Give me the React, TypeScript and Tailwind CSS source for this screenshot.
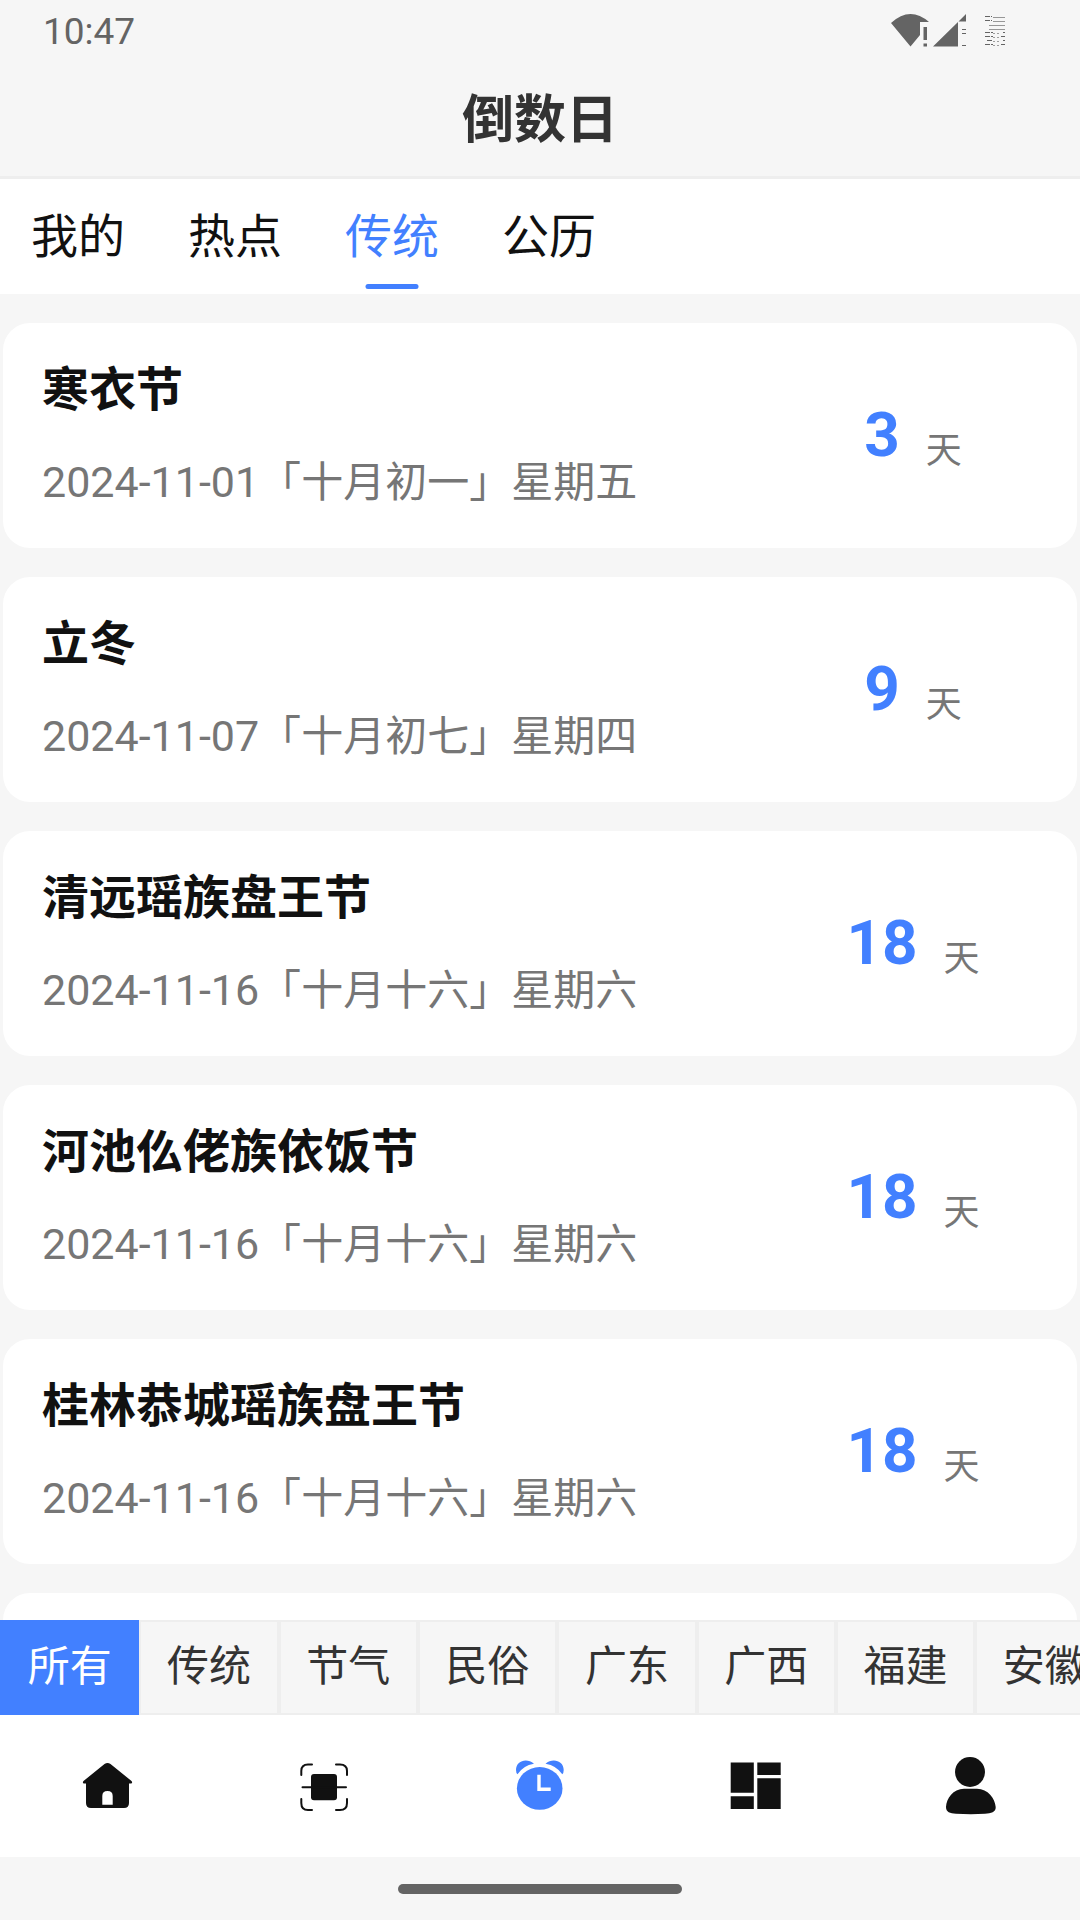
import { useState } from 'react';
import type { ReactNode } from 'react';
import clsx from 'clsx';

interface Festival {
  name: string;
  date: string;
  lunar: string;
  weekday: string;
  days: number;
}

const TABS = ['我的', '热点', '传统', '公历'];

const FILTERS = ['所有', '传统', '节气', '民俗', '广东', '广西', '福建', '安徽'];

const FESTIVALS: Festival[] = [
  { name: '寒衣节', date: '2024-11-01', lunar: '十月初一', weekday: '星期五', days: 3 },
  { name: '立冬', date: '2024-11-07', lunar: '十月初七', weekday: '星期四', days: 9 },
  { name: '清远瑶族盘王节', date: '2024-11-16', lunar: '十月十六', weekday: '星期六', days: 18 },
  { name: '河池仫佬族依饭节', date: '2024-11-16', lunar: '十月十六', weekday: '星期六', days: 18 },
  { name: '桂林恭城瑶族盘王节', date: '2024-11-16', lunar: '十月十六', weekday: '星期六', days: 18 },
];

function StatusIcons() {
  return (
    <svg width="116" height="36" viewBox="0 0 116 36" fill="#646464" aria-hidden="true">
      {/* wifi */}
      <path d="M0 11Q19 -6.500 38 10H29V23L19.500 34.500Z" />
      <path d="M32.500 15H36V28H32.500ZM32.500 31.500H36V34.500H32.500Z" />
      {/* signal */}
      <path d="M42 34.500L67 10V34.500ZM67.500 9.500L75 2V9.500Z" />
      <path d="M71 17H75V18H71ZM71 21H75V22H71ZM71 33H75V34H71Z" />
      {/* battery */}
      <g stroke="#646464" fill="none">
        <path d="M94 4.500H101M94 8.500H101M94 20.500H102M94 24.500H102M96 28.500H102M94 32.500H102" strokeDasharray="5 1" />
        <path d="M102 5.500H114M102 9.500H114M98 13.500H114M98 17.500H114" strokeOpacity="0.65" />
        <path d="M102 21.500H109M102 25.500H109M102 29.500H109M102 33.500H109" strokeDasharray="2 2" strokeOpacity="0.6" />
        <path d="M112 20.500H114M110 24.500H114M112 28.500H114M110 32.500H114" />
      </g>
    </svg>
  );
}

function NavIcon({ children }: { children: ReactNode }) {
  return (
    <svg width="60" height="60" viewBox="0 0 60 60" fill="currentColor" aria-hidden="true">
      {children}
    </svg>
  );
}

const NAV_ITEMS: { label: string; icon: ReactNode }[] = [
  {
    label: '首页',
    icon: (
      <path
        fillRule="evenodd"
        d="M26.500 8Q29.500 6 32.500 8L53.500 25Q55 27 53 27.500H51V47Q51 52 46 52H13Q8 52 8 47V27.500H6Q4 27 5.500 25ZM24.300 48.700H34.700V40Q34.700 35 29.500 35T24.300 40Z"
      />
    ),
  },
  {
    label: '扫描',
    icon: (
      <>
        <rect x="17" y="18" width="26" height="26.300" rx="3" />
        <path
          fill="none"
          stroke="currentColor"
          strokeWidth="2"
          strokeLinecap="round"
          d="M18 8.500H14Q7.300 8.500 7.300 15V19M42 8.500H46Q53 8.500 53 15V19M7.300 43V47Q7.300 54 14 54H18M53 43V47Q53 54 46 54H42M8.500 31.300H52"
        />
      </>
    ),
  },
  {
    label: '倒数日',
    icon: (
      <>
        <path d="M24 7.700C17 1.500 6 4.500 6 14Q6 17 7.500 18.300Q13 9.500 24 7.700Z" />
        <path d="M35.500 7.700C42.500 1.500 53.700 4.500 53.700 14Q53.700 17 52.300 18.300Q46.500 9.500 35.500 7.700Z" />
        <ellipse cx="29.700" cy="32.400" rx="22.800" ry="21.400" />
        <path d="M27.300 18.700H30.700V31.400H40.700V35H27.300Z" fill="#fff" />
      </>
    ),
  },
  {
    label: '分类',
    icon: <path d="M4.700 6.500H27.800V36.700H4.700ZM4.700 40.200H27.800V53H4.700ZM31.300 6.500H54.700V19H31.300ZM31.300 22.200H54.700V53H31.300Z" />,
  },
  {
    label: '个人中心',
    icon: (
      <>
        <circle cx="28" cy="16" r="15" />
        <path d="M22 32.700H35C46 33 53 42 53.700 51C54 56 49 57.500 43 57.800Q29 58.500 14 57.800C8 57.500 4 56 4 51C4.500 42 11 33 22 32.700Z" />
      </>
    ),
  },
];

function FestivalCard({ item }: { item: Festival }) {
  return (
    <li className="flex h-[225px] shrink-0 items-center rounded-[27px] bg-white pl-[39px]">
      <div className="flex flex-1 flex-col gap-[28px] pt-[2px]">
        <h2 className="text-[47px] leading-[64px] font-bold text-[#111]">{item.name}</h2>
        <p className="text-[42px] leading-[64px] whitespace-nowrap text-[#767676]">
          <time className="text-[43px]">{item.date}</time>「{item.lunar}」{item.weekday}
        </p>
      </div>
      <div className="flex w-[328px] items-center justify-center gap-[26px]">
        <span className="pb-[2px] text-[62px] leading-[72px] font-bold text-[#4280ff]">{item.days}</span>
        <span className="pt-[30px] text-[36px] leading-[42px] text-[#767676]">天</span>
      </div>
    </li>
  );
}

export default function App() {
  const [tab, setTab] = useState('传统');
  const [filter, setFilter] = useState('所有');
  const [page, setPage] = useState('倒数日');

  return (
    <div className="flex h-screen flex-col overflow-hidden bg-[#f6f6f6] font-['Roboto','Noto_Sans_CJK_SC',sans-serif]">
      {/* Status bar */}
      <div className="flex h-[60px] shrink-0 items-center justify-between pr-[73px] pl-[43px] text-[37px] leading-[44px] text-[#646464]">
        <span className="pt-1">10:47</span>
        <StatusIcons />
      </div>

      {/* Title */}
      <header className="flex h-[119px] shrink-0 items-center justify-center border-b-3 border-[#eee] pt-[6px]">
        <h1 className="text-[52px] leading-[72px] font-bold text-[#333]">倒数日</h1>
      </header>

      {/* Tabs */}
      <div role="tablist" className="flex h-[115px] shrink-0 gap-px bg-white">
        {TABS.map((name) => (
          <button
            key={name}
            type="button"
            role="tab"
            aria-selected={tab === name}
            onClick={() => setTab(name)}
            className={clsx(
              'relative h-full cursor-pointer px-[31px] text-[47px] leading-[64px]',
              tab === name ? 'text-[#4280ff]' : 'text-[#111]',
            )}
          >
            {name}
            {tab === name && (
              <span className="absolute bottom-[5px] left-1/2 h-[5px] w-[53px] -translate-x-1/2 rounded-full bg-[#4280ff]" />
            )}
          </button>
        ))}
      </div>

      {/* Countdown list */}
      <ul className="flex min-h-0 flex-1 flex-col gap-[29px] overflow-hidden px-[3px] pt-[29px]">
        {FESTIVALS.map((item) => (
          <FestivalCard key={item.name} item={item} />
        ))}
        <li aria-hidden="true" className="h-[225px] shrink-0 rounded-[27px] bg-white" />
      </ul>

      {/* Category filter */}
      <div className="flex h-[95px] shrink-0 overflow-hidden">
        {FILTERS.map((name) => (
          <button
            key={name}
            type="button"
            aria-pressed={filter === name}
            onClick={() => setFilter(name)}
            className={clsx(
              'w-[12.9%] shrink-0 cursor-pointer border-2 pb-[2px] text-[42px] leading-[60px] whitespace-nowrap',
              filter === name
                ? 'border-[#4280ff] bg-[#4280ff] text-white'
                : 'border-[#eee] text-[#333]',
            )}
          >
            {name}
          </button>
        ))}
      </div>

      {/* Bottom navigation */}
      <nav className="flex h-[142px] shrink-0 bg-white">
        {NAV_ITEMS.map(({ label, icon }) => (
          <button
            key={label}
            type="button"
            aria-label={label}
            onClick={() => setPage(label)}
            className={clsx(
              'flex flex-1 cursor-pointer items-center justify-center',
              page === label ? 'text-[#4280ff]' : 'text-[#111]',
            )}
          >
            <NavIcon>{icon}</NavIcon>
          </button>
        ))}
      </nav>

      {/* Gesture bar */}
      <div className="flex h-[63px] shrink-0 items-center justify-center">
        <div className="h-[10px] w-[284px] rounded-full bg-[#646464]" />
      </div>
    </div>
  );
}
